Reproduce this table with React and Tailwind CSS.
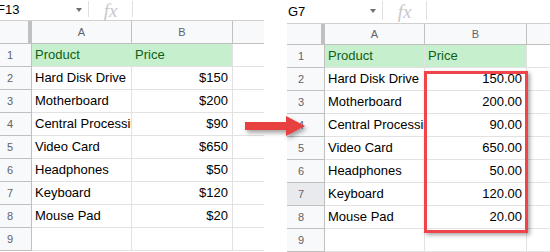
import React from 'react';

const products = ['Product', 'Hard Disk Drive', 'Motherboard', 'Central Processing Unit', 'Video Card', 'Headphones', 'Keyboard', 'Mouse Pad', ''];
const before = ['Price', '$150', '$200', '$90', '$650', '$50', '$120', '$20', ''];
const after = ['Price', '150.00', '200.00', '90.00', '650.00', '50.00', '120.00', '20.00', ''];

function TopBar({ name, h, boxW, nameShift }) {
  return (
    <div className={`flex items-stretch border-b border-[#d0d0d0] bg-white ${h}`}>
      <div className={`flex items-center justify-between pr-[6px] ${boxW}`}>
        <span className={`text-[13px] text-black ${nameShift}`}>{name}</span>
        <span className="w-0 h-0 border-l-[3px] border-r-[3px] border-t-[4px] border-l-transparent border-r-transparent border-t-[#707070]" />
      </div>
      <div className="my-[1px] mb-[3px] w-px bg-[#e0e0e0]" />
      <div className="w-[43px] flex items-center justify-center">
        <span className="text-[19px] italic text-[#c8c8c8] leading-none" style={{ fontFamily: '"Liberation Serif", serif' }}>fx</span>
      </div>
      <div className="my-[1px] mb-[3px] w-px bg-[#e0e0e0]" />
      <div className="flex-1" />
    </div>
  );
}

function Sheet({ name, prices, topH, boxW, nameShift, headW, numPad, headerH, thickBottom, selectedRow, colB, children }) {
  return (
    <div className="relative flex flex-col overflow-hidden h-[252px]">
      <TopBar name={name} h={topH} boxW={boxW} nameShift={nameShift} />
      <div className={`flex ${headerH} bg-[#f8f9fa] border-b border-[#c0c0c0] text-[11px] text-[#5f6368]`}>
        <div className={`${headW} shrink-0 border-r-4 border-[#c0c0c0] ${thickBottom ? 'border-b-4 -mb-[4px]' : ''}`} />
        <div className="w-[100px] shrink-0 border-r border-[#c0c0c0] flex items-center justify-center">A</div>
        <div className={`${colB} shrink-0 border-r border-[#c0c0c0] flex items-center justify-center`}>B</div>
        <div className="flex-1" />
      </div>
      {products.map((p, i) => (
        <div key={i} className="flex h-[23px] shrink-0 text-[13px]">
          <div className={`${headW} shrink-0 flex items-center ${numPad} text-[11px] text-[#5f6368] border-r border-b border-[#c0c0c0] ${selectedRow === i + 1 ? 'bg-[#e8eaed]' : 'bg-[#f8f9fa]'}`}>
            {i + 1}
          </div>
          <div className={`w-[100px] shrink-0 border-r border-b border-[#e2e2e2] flex items-center pl-[3px] overflow-hidden whitespace-nowrap ${i === 0 ? 'bg-[#c6efce] text-[#0e6114]' : 'text-black'}`}>
            {p}
          </div>
          <div className={`${colB} shrink-0 border-r border-b border-[#e2e2e2] flex items-center whitespace-nowrap ${i === 0 ? 'bg-[#c6efce] text-[#0e6114] pl-[3px]' : 'justify-end pr-[4px] text-black'}`}>
            {prices[i]}
          </div>
          <div className="flex-1 border-b border-[#e2e2e2]" />
        </div>
      ))}
      {children}
    </div>
  );
}

export default function App() {
  return (
    <div className="relative w-[550px] h-[252px] bg-white overflow-hidden flex gap-[23px]" style={{ fontFamily: '"Liberation Sans", Arial, sans-serif' }}>
      <div className="w-[264px] shrink-0">
        <Sheet name="F13" prices={before} topH="h-[21px]" boxW="w-[88px]" nameShift="-ml-[3px]" headW="w-[32px]" numPad="pl-[7px]" headerH="h-[23px]" colB="w-[101px]" />
      </div>
      <div className="flex-1">
        <Sheet name="G7" prices={after} topH="h-[25px]" boxW="w-[95px] pl-[1px]" nameShift="" headW="w-[38px]" numPad="pl-[11px]" headerH="h-[22px]" thickBottom selectedRow={7} colB="w-[102px]">
          <div className="absolute left-[137px] top-[71px] w-[104px] h-[162px] border-[3px] border-[#f0444a] shadow-[2px_2px_4px_rgba(0,0,0,0.35)]" />
        </Sheet>
      </div>
      <svg className="absolute left-[240px] top-[112px] drop-shadow-[2px_3px_2px_rgba(0,0,0,0.35)]" width="72" height="30" viewBox="0 0 72 30">
        <path d="M5 10 H46 V4 L65 14 L46 24 V18 H5 Z" fill="#e8403f" />
      </svg>
    </div>
  );
}
